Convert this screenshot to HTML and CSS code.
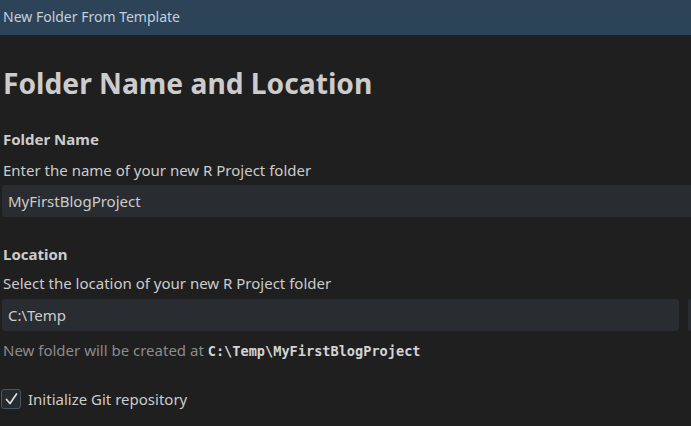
FILE: index.html
```html
<!DOCTYPE html>
<html>
<head>
<meta charset="utf-8">
<link rel="stylesheet" href="styles.css">
</head>
<body>
<div class="titlebar">New Folder From Template</div>
<div class="content">
  <h1 class="heading">Folder Name and Location</h1>
  <div class="field">
    <div class="label">Folder Name</div>
    <div class="desc">Enter the name of your new R Project folder</div>
    <div class="input wide">MyFirstBlogProject</div>
  </div>
  <div class="field field-location">
    <div class="label">Location</div>
    <div class="desc">Select the location of your new R Project folder</div>
    <div class="row">
      <div class="input">C:\Temp</div>
      <div class="browse"></div>
    </div>
    <div class="hint">New folder will be created at <span class="path">C:\Temp\MyFirstBlogProject</span></div>
  </div>
  <label class="check">
    <span class="box">
      <svg width="18" height="18" viewBox="0 0 18 18"><path d="M4.5 9.5 L8 13.5 L14.5 4" fill="none" stroke="#e0e0e0" stroke-width="1.7" stroke-linecap="round" stroke-linejoin="round"/></svg>
    </span>
    <span>Initialize Git repository</span>
  </label>
</div>
</body>
</html>
```

FILE: styles.css
```css
html, body {
  margin: 0;
  padding: 0;
  background: #1f1f1f;
  overflow: hidden;
}
body {
  font-family: "Noto Sans", "Open Sans", sans-serif;
  color: #cccccc;
  width: 691px;
  height: 426px;
}
.titlebar {
  height: 35px;
  background: #2d4358;
  color: #c3d0dc;
  font-size: 14px;
  line-height: 33px;
  padding-left: 3px;
  box-sizing: border-box;
}
.content {
  padding-left: 2px;
  overflow: hidden;
}
.heading {
  margin: 0;
  padding-top: 30px;
  font-size: 28.2px;
  font-weight: 700;
  line-height: 36px;
  color: #cccccc;
  padding-left: 1px;
}
.field {
  display: flex;
  flex-direction: column;
}
.label {
  font-size: 15px;
  font-weight: 700;
  margin-top: 28px;
  line-height: 20px;
  padding-left: 1px;
}
.desc {
  font-size: 15px;
  line-height: 20px;
  margin-top: 11px;
  padding-left: 1px;
}
.field-location .label {
  margin-top: 27px;
}
.field-location .desc {
  margin-top: 9px;
}
.input {
  box-sizing: border-box;
  height: 32px;
  background: #292d32;
  border-radius: 3px;
  font-size: 15px;
  line-height: 32px;
  padding-left: 6px;
  margin-top: 5px;
  color: #cccccc;
}
.wide {
  border-radius: 3px 0 0 3px;
}
.row {
  display: flex;
  gap: 9px;
  margin-top: 6px;
  overflow: hidden;
}
.row .input {
  margin-top: 0;
  width: 677px;
  flex: none;
}
.browse {
  flex: 1;
  height: 32px;
  border-radius: 3px 0 0 3px;
  background: #292d32;
}
.hint {
  margin-top: 9px;
  font-size: 15px;
  line-height: 20px;
  color: #8c8c8c;
  padding-left: 1px;
}
.path {
  font-family: "DejaVu Sans Mono", monospace;
  font-weight: 700;
  font-size: 13.6px;
  color: #d4d4d4;
}
.check {
  display: flex;
  align-items: center;
  gap: 7px;
  margin-top: 28px;
  font-size: 15px;
}
.box {
  box-sizing: border-box;
  width: 20px;
  height: 20px;
  border: 1px solid #465666;
  border-radius: 3px;
  background: #262b30;
  display: flex;
  align-items: center;
  justify-content: center;
  margin-left: -1px;
}
```
